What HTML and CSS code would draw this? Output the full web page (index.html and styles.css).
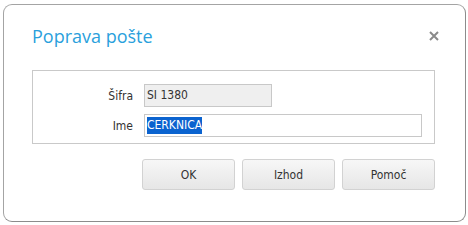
FILE: index.html
```html
<!DOCTYPE html>
<html>
<head>
<meta charset="utf-8">
<link rel="stylesheet" href="styles.css">
</head>
<body>
<div class="dialog">
  <div class="title-bar">
    <span class="title">Poprava pošte</span>
    <svg class="close" width="10" height="10" viewBox="0 0 10 10">
      <path d="M1 1 L9 9 M9 1 L1 9" stroke="#8a8a8a" stroke-width="2"/>
    </svg>
  </div>
  <div class="box">
    <div class="row">
      <label class="lbl">Šifra</label>
      <div class="field readonly">SI 1380</div>
    </div>
    <div class="row">
      <label class="lbl">Ime</label>
      <div class="field wide"><span class="sel">CERKNICA</span></div>
    </div>
  </div>
  <div class="buttons">
    <button class="btn">OK</button>
    <button class="btn">Izhod</button>
    <button class="btn">Pomoč</button>
  </div>
</div>
</body>
</html>
```

FILE: styles.css
```css
* {
  box-sizing: border-box;
}
body {
  margin: 0;
  background: #fff;
  font-family: "DejaVu Sans Condensed", "DejaVu Sans", sans-serif;
  font-size: 12px;
  color: #333;
}
.dialog {
  margin: 4px 0 0 3px;
  width: 463px;
  height: 218px;
  border: 1px solid #a4a4a4;
  border-right-color: #8c8c8c;
  border-bottom-color: #8c8c8c;
  border-radius: 9px;
  padding: 0 30px 0 28px;
}
.title-bar {
  display: flex;
  align-items: center;
  justify-content: space-between;
  height: 65px;
  padding-bottom: 4px;
}
.title {
  font-family: "Open Sans", sans-serif;
  font-size: 18px;
  color: #2a9fdc;
}
.close {
  margin-right: -4px;
}
.box {
  border: 1px solid #c9c9c9;
  padding: 13px 0 6px 0;
  display: flex;
  flex-direction: column;
  gap: 7px;
}
.row {
  display: flex;
  align-items: center;
}
.lbl {
  width: 100px;
  text-align: right;
  margin-right: 11px;
}
.field {
  height: 23px;
  width: 128px;
  border: 1px solid #c8c8c8;
  padding: 0 2px;
  line-height: 21px;
}
.readonly {
  background: #efefef;
}
.wide {
  width: 278px;
}
.sel {
  background: #0b63cf;
  color: #fff;
  display: inline-block;
  line-height: 17px;
}
.buttons {
  display: flex;
  justify-content: flex-end;
  gap: 7px;
  margin-top: 15px;
}
.btn {
  width: 93px;
  height: 31px;
  border: 1px solid #d2d2d2;
  border-radius: 3px;
  background: linear-gradient(#f7f7f7, #e6e6e6);
  font-family: "DejaVu Sans Condensed", "DejaVu Sans", sans-serif;
  font-size: 12px;
  color: #333;
}
```
